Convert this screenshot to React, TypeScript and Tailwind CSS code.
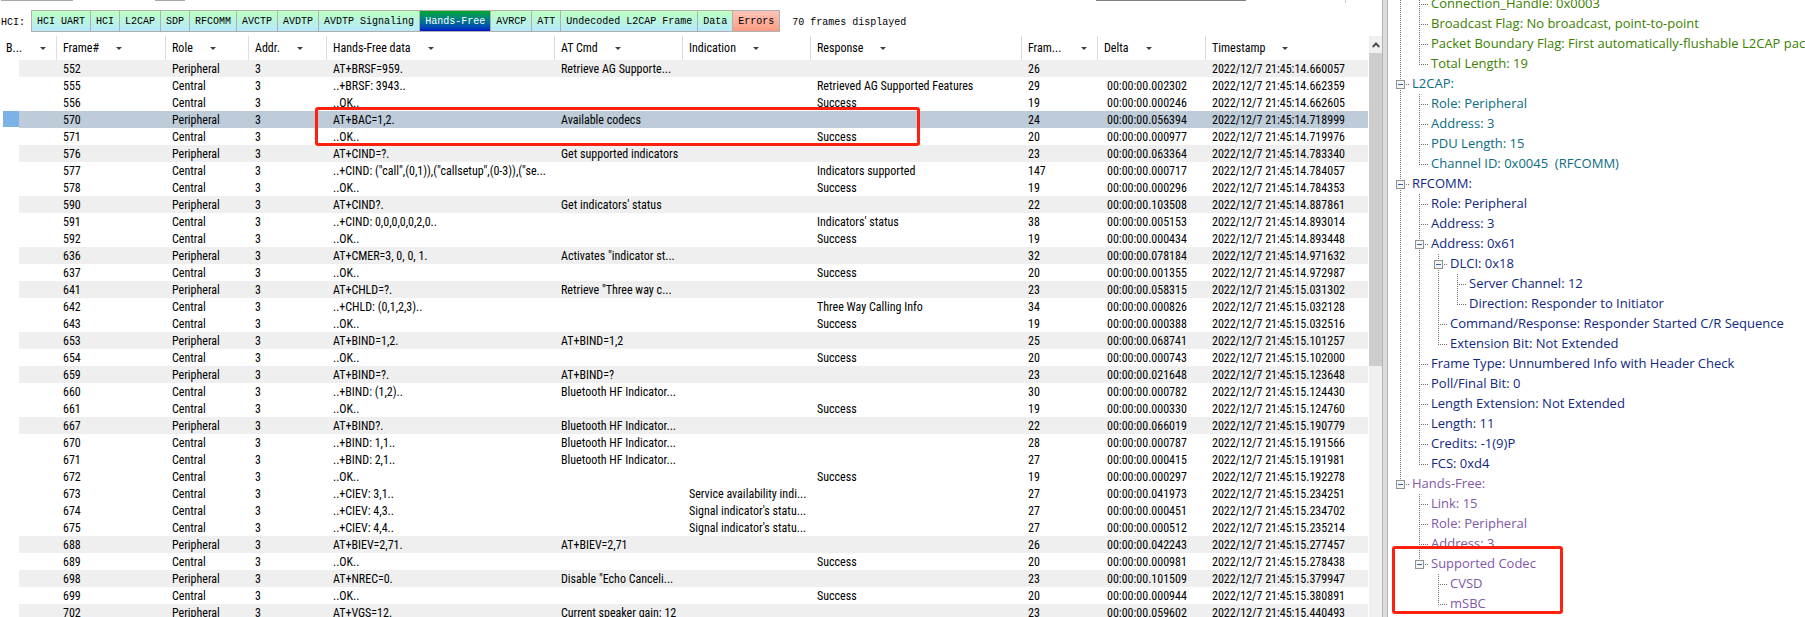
type Frame = {
  id: number;
  role: 'Peripheral' | 'Central';
  data: string;
  cmd?: string;
  indication?: string;
  response?: string;
  size: number;
  delta?: string;
  time: string;
};

const P = 'Peripheral' as const;
const C = 'Central' as const;

const frames: Frame[] = [
  { id: 552, role: P, data: 'AT+BRSF=959.', cmd: 'Retrieve AG Supporte...', size: 26, time: '14.660057' },
  { id: 555, role: C, data: '..+BRSF: 3943..', response: 'Retrieved AG Supported Features', size: 29, delta: '002302', time: '14.662359' },
  { id: 556, role: C, data: '..OK..', response: 'Success', size: 19, delta: '000246', time: '14.662605' },
  { id: 570, role: P, data: 'AT+BAC=1,2.', cmd: 'Available codecs', size: 24, delta: '056394', time: '14.718999' },
  { id: 571, role: C, data: '..OK..', response: 'Success', size: 20, delta: '000977', time: '14.719976' },
  { id: 576, role: P, data: 'AT+CIND=?.', cmd: 'Get supported indicators', size: 23, delta: '063364', time: '14.783340' },
  { id: 577, role: C, data: '..+CIND: ("call",(0,1)),("callsetup",(0-3)),("se...', response: 'Indicators supported', size: 147, delta: '000717', time: '14.784057' },
  { id: 578, role: C, data: '..OK..', response: 'Success', size: 19, delta: '000296', time: '14.784353' },
  { id: 590, role: P, data: 'AT+CIND?.', cmd: "Get indicators' status", size: 22, delta: '103508', time: '14.887861' },
  { id: 591, role: C, data: '..+CIND: 0,0,0,0,0,2,0..', response: "Indicators' status", size: 38, delta: '005153', time: '14.893014' },
  { id: 592, role: C, data: '..OK..', response: 'Success', size: 19, delta: '000434', time: '14.893448' },
  { id: 636, role: P, data: 'AT+CMER=3, 0, 0, 1.', cmd: 'Activates "indicator st...', size: 32, delta: '078184', time: '14.971632' },
  { id: 637, role: C, data: '..OK..', response: 'Success', size: 20, delta: '001355', time: '14.972987' },
  { id: 641, role: P, data: 'AT+CHLD=?.', cmd: 'Retrieve "Three way c...', size: 23, delta: '058315', time: '15.031302' },
  { id: 642, role: C, data: '..+CHLD: (0,1,2,3)..', response: 'Three Way Calling Info', size: 34, delta: '000826', time: '15.032128' },
  { id: 643, role: C, data: '..OK..', response: 'Success', size: 19, delta: '000388', time: '15.032516' },
  { id: 653, role: P, data: 'AT+BIND=1,2.', cmd: 'AT+BIND=1,2', size: 25, delta: '068741', time: '15.101257' },
  { id: 654, role: C, data: '..OK..', response: 'Success', size: 20, delta: '000743', time: '15.102000' },
  { id: 659, role: P, data: 'AT+BIND=?.', cmd: 'AT+BIND=?', size: 23, delta: '021648', time: '15.123648' },
  { id: 660, role: C, data: '..+BIND: (1,2)..', cmd: 'Bluetooth HF Indicator...', size: 30, delta: '000782', time: '15.124430' },
  { id: 661, role: C, data: '..OK..', response: 'Success', size: 19, delta: '000330', time: '15.124760' },
  { id: 667, role: P, data: 'AT+BIND?.', cmd: 'Bluetooth HF Indicator...', size: 22, delta: '066019', time: '15.190779' },
  { id: 670, role: C, data: '..+BIND: 1,1..', cmd: 'Bluetooth HF Indicator...', size: 28, delta: '000787', time: '15.191566' },
  { id: 671, role: C, data: '..+BIND: 2,1..', cmd: 'Bluetooth HF Indicator...', size: 27, delta: '000415', time: '15.191981' },
  { id: 672, role: C, data: '..OK..', response: 'Success', size: 19, delta: '000297', time: '15.192278' },
  { id: 673, role: C, data: '..+CIEV: 3,1..', indication: 'Service availability indi...', size: 27, delta: '041973', time: '15.234251' },
  { id: 674, role: C, data: '..+CIEV: 4,3..', indication: "Signal indicator's statu...", size: 27, delta: '000451', time: '15.234702' },
  { id: 675, role: C, data: '..+CIEV: 4,4..', indication: "Signal indicator's statu...", size: 27, delta: '000512', time: '15.235214' },
  { id: 688, role: P, data: 'AT+BIEV=2,71.', cmd: 'AT+BIEV=2,71', size: 26, delta: '042243', time: '15.277457' },
  { id: 689, role: C, data: '..OK..', response: 'Success', size: 20, delta: '000981', time: '15.278438' },
  { id: 698, role: P, data: 'AT+NREC=0.', cmd: 'Disable "Echo Canceli...', size: 23, delta: '101509', time: '15.379947' },
  { id: 699, role: C, data: '..OK..', response: 'Success', size: 20, delta: '000944', time: '15.380891' },
  { id: 702, role: P, data: 'AT+VGS=12.', cmd: 'Current speaker gain: 12', size: 23, delta: '059602', time: '15.440493' },
];

const SELECTED = 570;

const tabs = ['HCI UART', 'HCI', 'L2CAP', 'SDP', 'RFCOMM', 'AVCTP', 'AVDTP', 'AVDTP Signaling', 'Hands-Free', 'AVRCP', 'ATT', 'Undecoded L2CAP Frame', 'Data', 'Errors'];

function tabColours(name: string) {
  if (name === 'Hands-Free') return 'bg-linear-to-b from-[#08a818] to-[#0404c8] text-white';
  if (name === 'Errors') return 'bg-linear-to-b from-[#ffc4b8] to-[#ff9c84] text-black';
  return 'bg-linear-to-b from-[#bcffc0] to-[#b8e8fc] text-black';
}

const columns = [
  { label: 'B...', width: 'w-[57px]', cut: true },
  { label: 'Frame#', width: 'w-[109px]' },
  { label: 'Role', width: 'w-[83px]' },
  { label: 'Addr.', width: 'w-[78px]' },
  { label: 'Hands-Free data', width: 'w-[228px]' },
  { label: 'AT Cmd', width: 'w-[128px]' },
  { label: 'Indication', width: 'w-[128px]' },
  { label: 'Response', width: 'w-[211px]' },
  { label: 'Fram...', width: 'w-[76px]', cut: true },
  { label: 'Delta', width: 'w-[108px]' },
  { label: 'Timestamp', width: '' },
];

type Guide = 'line' | 'tee' | 'end' | 'box' | 'boxEnd' | 'blank';
type Node = { text: string; colour: string; guides: Guide[] };

const GREEN = 'text-[#3c8000]';
const TEAL = 'text-[#0c6c80]';
const NAVY = 'text-[#102880]';
const PURPLE = 'text-[#8058a8]';

const tree: Node[] = [
  { text: 'Connection_Handle: 0x0003', colour: GREEN, guides: ['line', 'tee'] },
  { text: 'Broadcast Flag: No broadcast, point-to-point', colour: GREEN, guides: ['line', 'tee'] },
  { text: 'Packet Boundary Flag: First automatically-flushable L2CAP packet', colour: GREEN, guides: ['line', 'tee'] },
  { text: 'Total Length: 19', colour: GREEN, guides: ['line', 'end'] },
  { text: 'L2CAP:', colour: TEAL, guides: ['box'] },
  { text: 'Role: Peripheral', colour: TEAL, guides: ['line', 'tee'] },
  { text: 'Address: 3', colour: TEAL, guides: ['line', 'tee'] },
  { text: 'PDU Length: 15', colour: TEAL, guides: ['line', 'tee'] },
  { text: 'Channel ID: 0x0045  (RFCOMM)', colour: TEAL, guides: ['line', 'end'] },
  { text: 'RFCOMM:', colour: NAVY, guides: ['box'] },
  { text: 'Role: Peripheral', colour: NAVY, guides: ['line', 'tee'] },
  { text: 'Address: 3', colour: NAVY, guides: ['line', 'tee'] },
  { text: 'Address: 0x61', colour: NAVY, guides: ['line', 'box'] },
  { text: 'DLCI: 0x18', colour: NAVY, guides: ['line', 'line', 'box'] },
  { text: 'Server Channel: 12', colour: NAVY, guides: ['line', 'line', 'line', 'tee'] },
  { text: 'Direction: Responder to Initiator', colour: NAVY, guides: ['line', 'line', 'line', 'end'] },
  { text: 'Command/Response: Responder Started C/R Sequence', colour: NAVY, guides: ['line', 'line', 'tee'] },
  { text: 'Extension Bit: Not Extended', colour: NAVY, guides: ['line', 'line', 'end'] },
  { text: 'Frame Type: Unnumbered Info with Header Check', colour: NAVY, guides: ['line', 'tee'] },
  { text: 'Poll/Final Bit: 0', colour: NAVY, guides: ['line', 'tee'] },
  { text: 'Length Extension: Not Extended', colour: NAVY, guides: ['line', 'tee'] },
  { text: 'Length: 11', colour: NAVY, guides: ['line', 'tee'] },
  { text: 'Credits: -1(9)P', colour: NAVY, guides: ['line', 'tee'] },
  { text: 'FCS: 0xd4', colour: NAVY, guides: ['line', 'end'] },
  { text: 'Hands-Free:', colour: PURPLE, guides: ['boxEnd'] },
  { text: 'Link: 15', colour: PURPLE, guides: ['blank', 'tee'] },
  { text: 'Role: Peripheral', colour: PURPLE, guides: ['blank', 'tee'] },
  { text: 'Address: 3', colour: PURPLE, guides: ['blank', 'tee'] },
  { text: 'Supported Codec', colour: PURPLE, guides: ['blank', 'boxEnd'] },
  { text: 'CVSD', colour: PURPLE, guides: ['blank', 'blank', 'tee'] },
  { text: 'mSBC', colour: PURPLE, guides: ['blank', 'blank', 'end'] },
];

function GuideCell({ kind }: { kind: Guide }) {
  const full = kind === 'line' || kind === 'tee' || kind === 'box';
  const half = kind === 'end' || kind === 'boxEnd';
  const branch = kind !== 'line' && kind !== 'blank';
  const box = kind === 'box' || kind === 'boxEnd';
  return (
    <svg width="19" height="20" viewBox="0 0 19 20" className="shrink-0" aria-hidden="true" shapeRendering="crispEdges">
      {(full || half) && <path d={full ? 'M9.5 0V20' : 'M9.5 0V11'} stroke="#6e6e6e" strokeDasharray="1 1" />}
      {branch && <path d="M9 10.5H18" stroke="#6e6e6e" strokeDasharray="1 1" />}
      {box && (
        <>
          <rect x="5.5" y="6.5" width="8" height="8" fill="#f4f4f4" stroke="#919191" />
          <path d="M7 10.5H12" stroke="#3c5cb4" />
        </>
      )}
    </svg>
  );
}

function Header({ label, cut }: { label: string; cut?: boolean }) {
  return (
    <div className={`flex h-6 items-center pl-1.5 ${cut ? 'justify-between pr-2.5' : 'gap-[17px]'}`}>
      <span>{label}</span>
      <svg width="6" height="3" viewBox="0 0 6 3" aria-hidden="true">
        <path d="M0 0H6L3 3Z" fill="#404040" />
      </svg>
    </div>
  );
}

function FrameRow({ frame }: { frame: Frame }) {
  const selected = frame.id === SELECTED;
  const bg = selected ? 'bg-[#becbd9]' : frame.role === 'Peripheral' ? 'bg-[#efefef]' : 'bg-white';
  const cell = `truncate pb-0 pl-1.5 pr-0 pt-0.5 ${bg}`;
  return (
    <tr aria-selected={selected} className="leading-[15px]">
      <td className="p-0">
        <div className="flex h-[17px] pl-[3px]">
          <span className={`h-4 w-4 ${selected ? 'bg-[#7cb2e6]' : ''}`} />
          <span className={`flex-1 ${bg}`} />
        </div>
      </td>
      <td className={cell}>{frame.id}</td>
      <td className={cell}>{frame.role}</td>
      <td className={cell}>3</td>
      <td className={cell}>{frame.data}</td>
      <td className={cell}>{frame.cmd}</td>
      <td className={cell}>{frame.indication}</td>
      <td className={cell}>{frame.response}</td>
      <td className={cell}>{frame.size}</td>
      <td className={`truncate pb-0 pl-[9px] pr-0 pt-0.5 ${bg}`}>{frame.delta && `00:00:00.${frame.delta}`}</td>
      <td className={cell}>{`2022/12/7 21:45:${frame.time}`}</td>
    </tr>
  );
}

export default function App() {
  return (
    <div className="flex h-screen overflow-hidden bg-white text-black">
      <main className="flex min-w-0 flex-1 flex-col">
        <div className="flex h-2.5 items-start">
          <div className="ml-px h-px w-[72px] bg-[#a8a8a8]" />
          <div className="ml-[82px] h-px w-[30px] bg-[#a8a8a8]" />
          <div className="ml-[911px] h-px w-[150px] bg-[#808080]" />
          <div className="ml-[99px] h-[3px] w-px bg-[#c8c8c8]" />
        </div>
        <div className="mb-1 flex h-[22px] items-center whitespace-nowrap pl-px font-['Liberation_Mono',monospace] text-[10px]">
          <span className="w-[30px] pt-0.5">HCI:</span>
          <div className="flex h-full border-l border-[#b0b0b0]">
            {tabs.map((name) => (
              <button key={name} type="button" className={`border-y border-r border-[#b0b0b0] px-[5px] ${tabColours(name)}`}>
                {name}
              </button>
            ))}
          </div>
          <span className="ml-3 pt-0.5">70 frames displayed</span>
        </div>
        <div className="relative flex min-h-0 flex-1">
          <div className="min-w-0 flex-1 overflow-hidden">
            <table className="w-full table-fixed border-collapse text-left font-['Roboto_Condensed','Liberation_Sans_Narrow',Roboto,sans-serif] text-xs">
              <thead>
                <tr>
                  {columns.map((c, i) => (
                    <th key={c.label} scope="col" className={`p-0 font-normal ${c.width}`}>
                      <div className={i < columns.length - 1 ? 'border-r border-[#dedede]' : ''}>
                        <Header label={c.label} cut={c.cut} />
                      </div>
                    </th>
                  ))}
                </tr>
              </thead>
              <tbody>
                {frames.map((f) => (
                  <FrameRow key={f.id} frame={f} />
                ))}
              </tbody>
            </table>
          </div>
          <div className="ml-px flex w-[13px] flex-col bg-[#f0f0f0]">
            <button type="button" aria-label="Scroll up" className="flex h-[17px] items-center justify-center">
              <svg width="8" height="6" viewBox="0 0 8 6" aria-hidden="true">
                <path d="M0.7 5L4 1.5L7.3 5" fill="none" stroke="#505050" strokeWidth="2" />
              </svg>
            </button>
            <div className="h-[313px] bg-[#cdcdcd]" />
          </div>
          <div className="pointer-events-none absolute left-[315px] top-[71px] h-[39px] w-[605px] rounded-[3px] border-3 border-[#ff2010]" />
        </div>
      </main>
      <div className="w-1.5 border-x border-[#b4b4b4] bg-[#dcdcdc]" />
      <aside className="relative w-[417px] overflow-hidden">
        <ul className="-mt-1.5 pl-[3px] font-['Open_Sans','Noto_Sans',sans-serif] text-[13px] leading-[18px]">
          {tree.map((n, i) => (
            <li key={i} className={`flex h-5 whitespace-pre ${n.colour}`}>
              {n.guides.map((g, j) => (
                <GuideCell key={j} kind={g} />
              ))}
              <span className="pl-0.5">{n.text}</span>
            </li>
          ))}
        </ul>
        <div className="pointer-events-none absolute left-1 top-[546px] h-[68px] w-[171px] rounded-[3px] border-3 border-[#ff2010]" />
      </aside>
    </div>
  );
}
